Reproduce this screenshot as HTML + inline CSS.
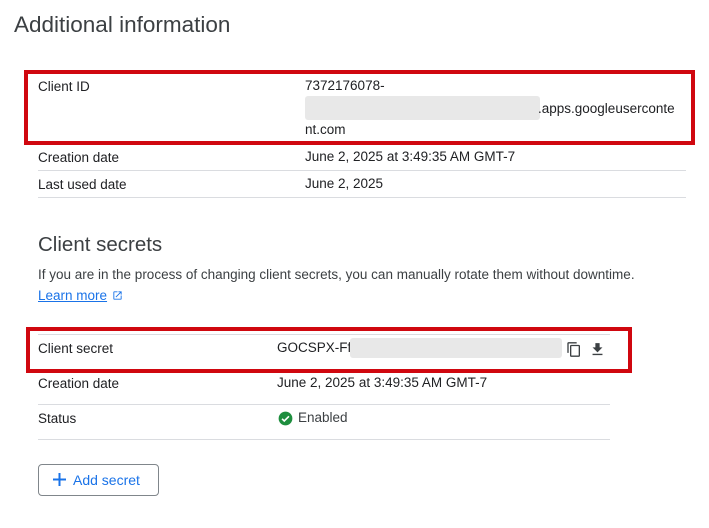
<html><head><style>
body{margin:0;width:709px;height:528px;background:#fff;font-family:"Liberation Sans",sans-serif;color:#202124;position:relative;overflow:hidden}
.a{position:absolute;white-space:nowrap}
.t{font-size:13.5px}
.l{position:absolute;height:1px;background:#dadce0}
.r{position:absolute;border:4px solid #d0070f}
.blur{position:absolute;background:#e8e8e8;border-radius:3px}
</style></head><body>
<div class="a" style="left:14px;top:12px;font-size:22.5px;color:#3c4043">Additional information</div>

<div class="a t" style="left:38px;top:79px">Client ID</div>
<div class="a t" style="left:305px;top:78px">7372176078-</div>
<div class="blur" style="left:305px;top:96px;width:235px;height:24px"></div>
<div class="a t" style="left:538px;top:101px">.apps.googleuserconte</div>
<div class="a t" style="left:305px;top:122px">nt.com</div>
<div class="r" style="left:24px;top:70px;width:663px;height:67px"></div>

<div class="a t" style="left:38px;top:150px">Creation date</div>
<div class="a t" style="left:305px;top:149px">June 2, 2025 at 3:49:35 AM GMT-7</div>
<div class="l" style="left:38px;top:170px;width:648px"></div>
<div class="a t" style="left:38px;top:177px">Last used date</div>
<div class="a t" style="left:305px;top:176px">June 2, 2025</div>
<div class="l" style="left:38px;top:197px;width:648px"></div>

<div class="a" style="left:38px;top:233px;font-size:20.5px;color:#3c4043">Client secrets</div>
<div class="a t" style="left:38px;top:267px;color:#3c4043">If you are in the process of changing client secrets, you can manually rotate them without downtime.</div>
<div class="a t" style="left:38px;top:288px;color:#1a73e8;text-decoration:underline">Learn more</div>
<svg class="a" style="left:112px;top:290px" width="11" height="11" viewBox="0 0 24 24"><path d="M19 19H5V5h7V3H5a2 2 0 0 0-2 2v14a2 2 0 0 0 2 2h14a2 2 0 0 0 2-2v-7h-2v7zM14 3v2h3.6l-9.8 9.8 1.4 1.4L19 6.4V10h2V3h-7z" fill="#1a73e8"/></svg>

<div class="l" style="left:38px;top:334px;width:572px"></div>
<div class="a t" style="left:38px;top:341px">Client secret</div>
<div class="a t" style="left:277px;top:340px">GOCSPX-Ff</div>
<div class="blur" style="left:350px;top:338px;width:212px;height:20px"></div>
<svg class="a" style="left:566px;top:341px" width="16" height="17" viewBox="0 0 24 24"><path d="M16 1H4a2 2 0 0 0-2 2v14h2V3h12V1zm3 4H8a2 2 0 0 0-2 2v14a2 2 0 0 0 2 2h11a2 2 0 0 0 2-2V7a2 2 0 0 0-2-2zm0 16H8V7h11v14z" fill="#3c4043"/></svg>
<svg class="a" style="left:589px;top:341px" width="17" height="17" viewBox="0 0 24 24"><path d="M19 9h-4V3H9v6H5l7 7 7-7zM5 18v2h14v-2H5z" fill="#3c4043"/></svg>
<div class="r" style="left:26px;top:327px;width:598px;height:38px"></div>

<div class="a t" style="left:38px;top:376px">Creation date</div>
<div class="a t" style="left:277px;top:375px">June 2, 2025 at 3:49:35 AM GMT-7</div>
<div class="l" style="left:38px;top:404px;width:572px"></div>
<svg class="a" style="left:278px;top:411px" width="15" height="15" viewBox="0 0 24 24"><circle cx="12" cy="12" r="11" fill="#1e8e3e"/><path d="M6.5 12.5l3.5 3.5 7.5-7.5" stroke="#fff" stroke-width="2.6" fill="none"/></svg>
<div class="a t" style="left:298px;top:410px;color:#3c4043">Enabled</div>
<div class="a t" style="left:38px;top:411px">Status</div>
<div class="l" style="left:38px;top:439px;width:572px"></div>

<div class="a" style="left:38px;top:464px;width:119px;height:30px;border:1px solid #80868b;border-radius:4px"></div>
<svg class="a" style="left:53px;top:473px" width="13" height="13" viewBox="0 0 13 13"><path d="M6.5 0v13M0 6.5h13" stroke="#1a73e8" stroke-width="2"/></svg>
<div class="a" style="left:73px;top:472px;font-size:14px;color:#1a73e8">Add secret</div>
</body></html>
